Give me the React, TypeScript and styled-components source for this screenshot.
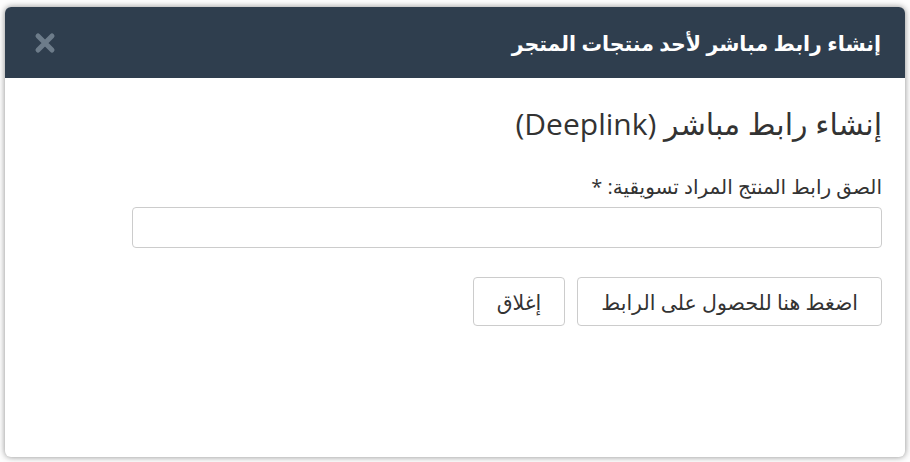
import React from 'react';
import styled, { createGlobalStyle } from 'styled-components';

const GlobalStyle = createGlobalStyle`
  html, body {
    margin: 0;
    padding: 0;
    background: #fdfdfd;
    font-family: "Open Sans", "DejaVu Sans", sans-serif;
  }
`;

const Page = styled.div`
  padding: 7px 5px 5px 5px;
  height: 462px;
  box-sizing: border-box;
`;

const Modal = styled.div`
  direction: rtl;
  width: 900px;
  height: 450px;
  background: #fff;
  border-radius: 6px;
  box-shadow: 0 0 6px rgba(0, 0, 0, 0.45);
  overflow: hidden;
  display: flex;
  flex-direction: column;
`;

const Header = styled.div`
  height: 71px;
  background: #2f3e4e;
  display: flex;
  align-items: center;
  justify-content: space-between;
  padding: 0 24px 0 28px;
`;

const Title = styled.h4`
  margin: 0;
  color: #fff;
  font-size: 20.5px;
  font-weight: bold;
`;

const Close = styled.button`
  border: none;
  background: none;
  padding: 0;
  width: 24px;
  height: 24px;
  display: flex;
  align-items: center;
  justify-content: center;
  cursor: pointer;
`;

const Body = styled.div`
  padding: 28px 23px 0 24px;
`;

const Heading = styled.h3`
  margin: 0 0 32px 0;
  font-size: 30px;
  line-height: 36px;
  font-weight: normal;
  color: #333;
`;

const Label = styled.label`
  display: block;
  font-size: 20px;
  line-height: 26px;
  color: #333;
  margin-bottom: 7px;
`;

const Input = styled.input`
  display: block;
  width: 750px;
  height: 41px;
  box-sizing: border-box;
  border: 1px solid #ccc;
  border-radius: 4px;
  font-size: 16px;
  padding: 6px 12px;
`;

const Actions = styled.div`
  display: flex;
  gap: 12px;
  margin-top: 29px;
`;

const Button = styled.button`
  height: 49px;
  padding: 0 23px;
  background: #fff;
  border: 1px solid #ccc;
  border-radius: 4px;
  font-family: inherit;
  font-size: 20.5px;
  color: #333;
  cursor: pointer;
`;

export default function App() {
  return (
    <>
      <GlobalStyle />
      <Page>
        <Modal>
          <Header>
            <Title>إنشاء رابط مباشر لأحد منتجات المتجر</Title>
            <Close aria-label="close">
              <svg width="22" height="22" viewBox="0 0 22 22">
                <path
                  d="M4 4 L18 18 M18 4 L4 18"
                  stroke="#6d7c8a"
                  strokeWidth="5"
                  strokeLinecap="round"
                />
              </svg>
            </Close>
          </Header>
          <Body>
            <Heading>إنشاء رابط مباشر (Deeplink)</Heading>
            <Label>الصق رابط المنتج المراد تسويقية: *</Label>
            <Input type="text" />
            <Actions>
              <Button>اضغط هنا للحصول على الرابط</Button>
              <Button>إغلاق</Button>
            </Actions>
          </Body>
        </Modal>
      </Page>
    </>
  );
}
